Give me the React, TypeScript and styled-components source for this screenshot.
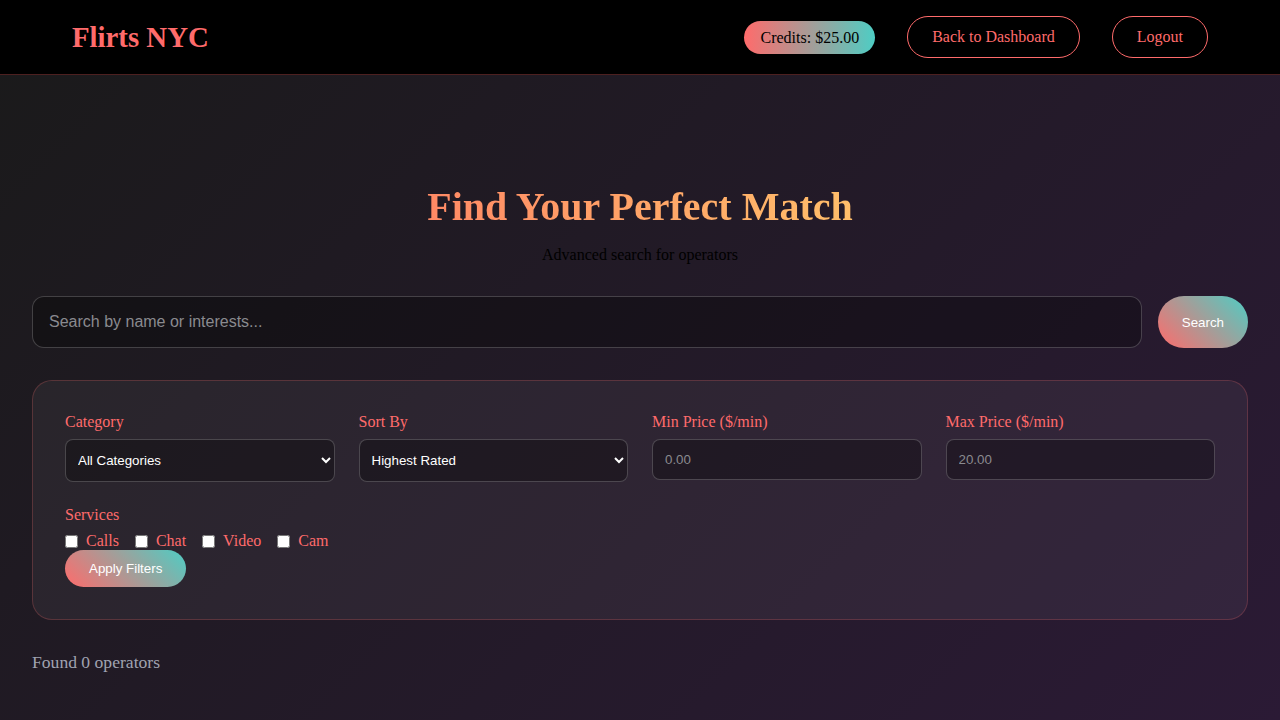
import React from "react";
import styled, { createGlobalStyle } from "styled-components";

const Global = createGlobalStyle`
  html, body { margin: 0; padding: 0; }
  body {
    font-family: "Liberation Serif", "Times New Roman", serif;
    font-size: 16px;
    min-height: 100vh;
    background: linear-gradient(135deg, #1a1a1a 0%, #2b1a35 100%);
    background-attachment: fixed;
  }
  * { box-sizing: border-box; }
`;

const Page = styled.div`
  min-height: 100vh;
`;

const Header = styled.header`
  display: flex;
  align-items: center;
  justify-content: space-between;
  height: 75px;
  background: #000;
  padding: 0 72px;
  border-bottom: 1px solid rgba(255, 107, 107, 0.3);
`;

const Logo = styled.div`
  font-size: 28.8px;
  font-weight: 700;
  color: #ff6b6b;
`;

const Nav = styled.nav`
  display: flex;
  align-items: center;
  gap: 32px;
`;

const Credits = styled.span`
  background: linear-gradient(90deg, #ff6b6b, #4ecdc4);
  color: #000;
  padding: 7px 16px;
  line-height: 19px;
  border-radius: 20px;
  font-size: 16px;
`;

const OutlineButton = styled.button`
  background: transparent;
  border: 1px solid #ff6b6b;
  color: #ff6b6b;
  font-family: "Liberation Serif", "Times New Roman", serif;
  font-size: 16px;
  line-height: 18px;
  padding: 11px 24px;
  border-radius: 25px;
  cursor: pointer;
`;

const Main = styled.main`
  padding: 0 32px 32px;
`;

const Hero = styled.section`
  text-align: center;
  padding-top: 109px;
  margin-bottom: 32px;
`;

const Title = styled.h1`
  margin: 0 0 16px;
  font-size: 40px;
  font-weight: 700;
  line-height: 46px;
  background: linear-gradient(90deg, #ff8a65, #ffbe6a);
  -webkit-background-clip: text;
  background-clip: text;
  color: transparent;
  display: inline-block;
`;

const Subtitle = styled.p`
  margin: 0;
  color: #000;
  font-size: 16px;
`;

const SearchRow = styled.div`
  display: flex;
  gap: 16px;
  margin-bottom: 32px;
`;

const SearchInput = styled.input`
  flex: 1;
  height: 52px;
  padding: 0 16px;
  border-radius: 12px;
  border: 1px solid rgba(255, 255, 255, 0.2);
  background: rgba(0, 0, 0, 0.3);
  color: #fff;
  font-family: "Liberation Sans", Arial, sans-serif;
  font-size: 16px;
  outline: none;
  &::placeholder { color: #8a8a8f; }
`;

const GradientButton = styled.button<{ $height?: number }>`
  background: linear-gradient(45deg, #ff6b6b, #4ecdc4);
  border: none;
  color: #fff;
  font-family: "Liberation Sans", Arial, sans-serif;
  font-size: 13.33px;
  font-weight: 500;
  height: ${(p) => p.$height ?? 37}px;
  padding: 0 24px;
  border-radius: ${(p) => (p.$height ?? 37) / 2}px;
  cursor: pointer;
`;

const Card = styled.section`
  background: rgba(255, 255, 255, 0.05);
  border: 1px solid rgba(255, 107, 107, 0.22);
  border-radius: 20px;
  padding: 32px;
  margin-bottom: 32px;
`;

const FilterGrid = styled.div`
  display: grid;
  grid-template-columns: repeat(4, 1fr);
  gap: 24px;
  margin-bottom: 24px;
`;

const Field = styled.div`
  display: flex;
  flex-direction: column;
`;

const Label = styled.label`
  color: #ff6b6b;
  font-size: 16px;
  margin-bottom: 8px;
  line-height: 18px;
`;

const Select = styled.select`
  height: 43px;
  padding: 0 8px;
  border-radius: 8px;
  border: 1px solid rgba(255, 255, 255, 0.2);
  background: rgba(0, 0, 0, 0.3);
  color: #fff;
  font-family: "Liberation Sans", Arial, sans-serif;
  font-size: 13.33px;
  outline: none;
  option { background: #1e1a22; }
`;

const NumberInput = styled.input`
  height: 41px;
  padding: 0 12px;
  border-radius: 8px;
  border: 1px solid rgba(255, 255, 255, 0.2);
  background: rgba(0, 0, 0, 0.3);
  color: #fff;
  font-family: "Liberation Sans", Arial, sans-serif;
  font-size: 13.33px;
  outline: none;
  &::placeholder { color: #8a8a8f; }
`;

const ServicesRow = styled.div`
  display: flex;
  gap: 16px;
  align-items: center;
  height: 18px;
`;

const CheckLabel = styled.label`
  display: flex;
  align-items: center;
  color: #ff6b6b;
  font-size: 16px;
  gap: 8px;
  input { margin: 0; width: 13px; height: 13px; }
`;

const Results = styled.div`
  color: #a0a3b1;
  font-size: 17.6px;
`;

export default function App() {
  return (
    <Page>
      <Global />
      <Header>
        <Logo>Flirts NYC</Logo>
        <Nav>
          <Credits>Credits: $25.00</Credits>
          <OutlineButton>Back to Dashboard</OutlineButton>
          <OutlineButton>Logout</OutlineButton>
        </Nav>
      </Header>
      <Main>
        <Hero>
          <Title>Find Your Perfect Match</Title>
          <Subtitle>Advanced search for operators</Subtitle>
        </Hero>
        <SearchRow>
          <SearchInput placeholder="Search by name or interests..." />
          <GradientButton $height={52}>Search</GradientButton>
        </SearchRow>
        <Card>
          <FilterGrid>
            <Field>
              <Label>Category</Label>
              <Select defaultValue="all">
                <option value="all">All Categories</option>
              </Select>
            </Field>
            <Field>
              <Label>Sort By</Label>
              <Select defaultValue="rated">
                <option value="rated">Highest Rated</option>
              </Select>
            </Field>
            <Field>
              <Label>Min Price ($/min)</Label>
              <NumberInput placeholder="0.00" />
            </Field>
            <Field>
              <Label>Max Price ($/min)</Label>
              <NumberInput placeholder="20.00" />
            </Field>
          </FilterGrid>
          <Field>
            <Label>Services</Label>
            <ServicesRow>
              {["Calls", "Chat", "Video", "Cam"].map((s) => (
                <CheckLabel key={s}>
                  <input type="checkbox" />
                  {s}
                </CheckLabel>
              ))}
            </ServicesRow>
          </Field>
          <div>
            <GradientButton>Apply Filters</GradientButton>
          </div>
        </Card>
        <Results>Found 0 operators</Results>
      </Main>
    </Page>
  );
}
